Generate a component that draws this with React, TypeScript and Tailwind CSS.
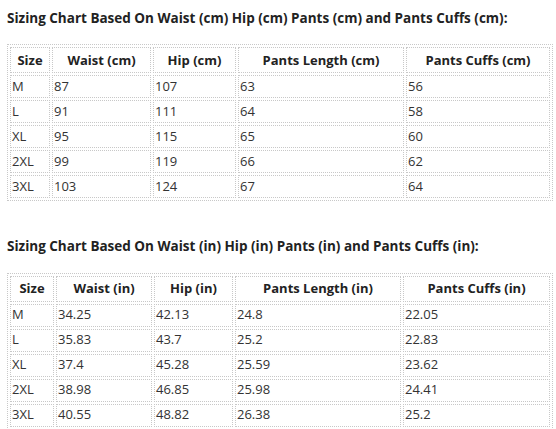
const cm = [
  ["M", "87", "107", "63", "56"],
  ["L", "91", "111", "64", "58"],
  ["XL", "95", "115", "65", "60"],
  ["2XL", "99", "119", "66", "62"],
  ["3XL", "103", "124", "67", "64"],
];

const inch = [
  ["M", "34.25", "42.13", "24.8", "22.05"],
  ["L", "35.83", "43.7", "25.2", "22.83"],
  ["XL", "37.4", "45.28", "25.59", "23.62"],
  ["2XL", "38.98", "46.85", "25.98", "24.41"],
  ["3XL", "40.55", "48.82", "26.38", "25.2"],
];

const SizeTable = ({
  unit,
  rows,
  widths,
}: {
  unit: string;
  rows: string[][];
  widths: string[];
}) => {
  const heads = ["Size", `Waist (${unit})`, `Hip (${unit})`, `Pants Length (${unit})`, `Pants Cuffs (${unit})`];
  return (
    <table className="w-[546px] table-fixed border-separate border-spacing-[2px] border border-dotted border-[#c8c8c8] text-[13px]">
      <colgroup>
        {widths.map((w, i) => (
          <col key={i} style={{ width: w }} />
        ))}
      </colgroup>
      <thead>
        <tr>
          {heads.map((h) => (
            <th
              key={h}
              className="h-[26px] border border-dotted border-[#c8c8c8] px-1 text-center font-bold text-[#222]"
            >
              {h}
            </th>
          ))}
        </tr>
      </thead>
      <tbody>
        {rows.map((r) => (
          <tr key={r[0]}>
            {r.map((c, i) => (
              <td key={i} className="h-[23px] border border-dotted border-[#c8c8c8] px-[1px] text-left text-[#333]">
                {c}
              </td>
            ))}
          </tr>
        ))}
      </tbody>
    </table>
  );
};

export default function App() {
  return (
    <div className="h-[429px] w-[556px] overflow-hidden bg-white px-[7px] pt-[8px] font-['Open_Sans',sans-serif]">
      <h3 className="mb-[16px] text-[13.5px] font-bold text-[#222]">
        Sizing Chart Based On Waist (cm) Hip (cm) Pants (cm) and Pants Cuffs (cm):
      </h3>
      <SizeTable unit="cm" rows={cm} widths={["40px", "99px", "83px", "166px", "144px"]} />
      <h3 className="mb-[16px] mt-[35px] text-[13.5px] font-bold text-[#222]">
        Sizing Chart Based On Waist (in) Hip (in) Pants (in) and Pants Cuffs (in):
      </h3>
      <SizeTable unit="in" rows={inch} widths={["44px", "96px", "79px", "166px", "147px"]} />
    </div>
  );
}
